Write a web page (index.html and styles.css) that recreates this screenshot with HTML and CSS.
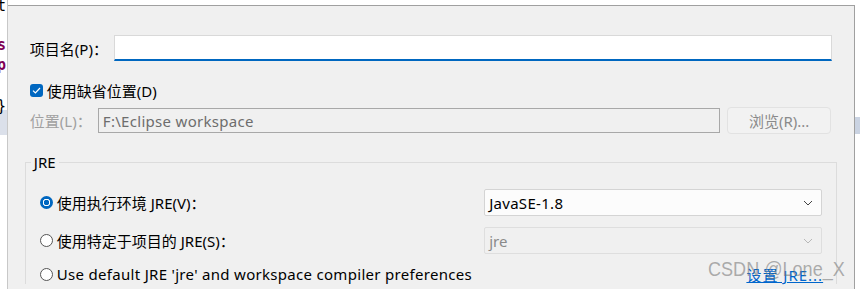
FILE: index.html
```html
<!DOCTYPE html>
<html lang="zh-CN">
<head>
  <meta charset="UTF-8">
  <title>新建 Java 项目</title>
  <link rel="stylesheet" href="styles.css">
</head>
<body>
  <div class="screen">
    <div class="editor-strip">
      <div class="code-line">t</div>
      <div class="code-line"></div>
      <div class="code-line kw">s</div>
      <div class="code-line kw">p</div>
      <div class="code-line"></div>
      <div class="code-line brace">}</div>
      <div class="code-line current"></div>
    </div>

    <div class="dialog">
      <div class="row name-row">
        <label class="field-label name-label">项目名(P)：</label>
        <input type="text" class="text-input focused" value="">
      </div>

      <div class="row check-row">
        <span class="checkbox checked">
          <svg width="9" height="7" viewBox="0 0 9 7"><path d="M1 3.6 L3.4 6 L8 1" fill="none" stroke="#fff" stroke-width="1.2"/></svg>
        </span>
        <span>使用缺省位置(D)</span>
      </div>

      <div class="row location-row">
        <label class="field-label loc-label disabled">位置(L)：</label>
        <div class="text-input disabled-input">F:\Eclipse workspace</div>
        <button class="browse-btn" disabled>浏览(R)...</button>
      </div>

      <fieldset class="group">
        <legend>JRE</legend>

        <div class="radio-row">
          <span class="radio selected"></span>
          <span>使用执行环境 JRE(V)：</span>
          <div class="combo">
            <span class="latin">JavaSE-1.8</span>
            <svg width="10" height="6" viewBox="0 0 10 6"><path d="M1 1 L5 5 L9 1" fill="none" stroke="#444" stroke-width="1"/></svg>
          </div>
        </div>

        <div class="radio-row">
          <span class="radio"></span>
          <span>使用特定于项目的 JRE(S)：</span>
          <div class="combo combo-disabled">
            <span>jre</span>
            <svg width="10" height="6" viewBox="0 0 10 6"><path d="M1 1 L5 5 L9 1" fill="none" stroke="#b8b8b8" stroke-width="1"/></svg>
          </div>
        </div>

        <div class="radio-row last-row">
          <span class="radio"></span>
          <span class="latin">Use default JRE 'jre' and workspace compiler preferences</span>
          <a href="#" class="link">设置 JRE...</a>
        </div>
      </fieldset>
    </div>

    <div class="side-strip">
      <div class="side-mark"></div>
    </div>

    <div class="watermark">CSDN @Lone_X</div>
  </div>
</body>
</html>
```

FILE: styles.css
```css
html, body { margin: 0; padding: 0; background: #fff; }
body { font-family: "Noto Sans", "Noto Sans CJK SC", sans-serif; font-size: 15px; color: #000; width: 860px; height: 289px; overflow: hidden; }

.screen { display: flex; height: 289px; position: relative; overflow: hidden; }

.editor-strip { width: 7px; border-right: 1px solid #c8c8c8; background: #fff; overflow: hidden; }
.code-line { height: 19.5px; line-height: 19.5px; font-family: "DejaVu Sans Mono", monospace; font-size: 15px; margin-left: -3px; white-space: nowrap; }
.code-line:first-child { margin-top: -3px; }
.code-line.kw { color: #7f0055; font-weight: bold; }
.code-line.brace { margin-top: 2px; }
.code-line.current { height: 25px; margin-top: -6px; margin-left: 0; background: #dbe0ea; }

.dialog { width: 824px; margin-top: 5px; border-top: 1px solid #a0a0a0; border-right: 1px solid #a0a0a0; background: #f0f0f0; padding: 0 22px; }

.side-strip { width: 5px; background: #fff; }
.side-mark { margin-top: 117px; height: 17px; background: #cad3e2; }

.latin { letter-spacing: 0.3px; }

.row { display: flex; align-items: center; }
.field-label { white-space: nowrap; }
.name-row { margin-top: 29px; }
.name-label { width: 84px; }
.loc-label { width: 68px; }
.disabled { color: #a0a0a0; }

.text-input { flex: 1; box-sizing: border-box; height: 26px; border: 1px solid #d9d9d9; background: #fff; font: inherit; padding: 0 4px; outline: none; }
.text-input.focused { border-bottom: 2px solid #0067c0; }

.check-row { margin-top: 19px; height: 20px; gap: 4px; }
.checkbox { width: 13px; height: 13px; border-radius: 3px; background: #0067c0; display: flex; align-items: center; justify-content: center; }

.location-row { margin-top: 7px; height: 27px; }
.disabled-input { height: 25px; display: flex; align-items: center; background: #f0f0f0; border: 1px solid #a8a8a8; color: #6d6d6d; letter-spacing: 0.3px; }
.browse-btn { width: 104px; height: 27px; margin-left: 7px; margin-right: 1px; border: 1px solid #e2e2e2; border-radius: 4px; background: #f2f2f2; color: #8a8a8a; font: inherit; padding: 0; }

.group { margin: 18px -5px 0; padding: 17px 14px 0; border: 1px solid #dcdcdc; border-bottom: none; }
.group legend { padding: 0 3px; margin-left: -9px; line-height: 20px; }

.radio-row { display: flex; align-items: center; gap: 4px; height: 27px; }
.radio-row + .radio-row { margin-top: 11px; }
.radio-row.last-row { height: 20px; margin-top: 10px; }
.radio { width: 11px; height: 11px; border: 1px solid #555; border-radius: 50%; background: #fff; flex: none; }
.radio.selected { width: 13px; height: 13px; border: none; background: radial-gradient(circle, #0067c0 0 2.5px, #fff 3px 3.5px, #0067c0 4px); }

.combo { margin-left: auto; width: 338px; height: 27px; box-sizing: border-box; border: 1px solid #d4d4d4; border-radius: 2px; background: #fcfcfc; display: flex; align-items: center; justify-content: space-between; padding: 0 8px 0 4px; }
.combo-disabled { background: #f0f0f0; border-color: #dedede; color: #8a8a8a; }

.link { margin-left: auto; margin-right: -1px; color: #0066cc; text-decoration: underline; letter-spacing: 1px; }

.watermark { position: absolute; left: 708px; top: 257px; font-family: "Liberation Sans", sans-serif; font-size: 21px; color: rgba(110, 110, 110, 0.55); white-space: nowrap; transform: scaleX(0.86); transform-origin: left center; }
```
